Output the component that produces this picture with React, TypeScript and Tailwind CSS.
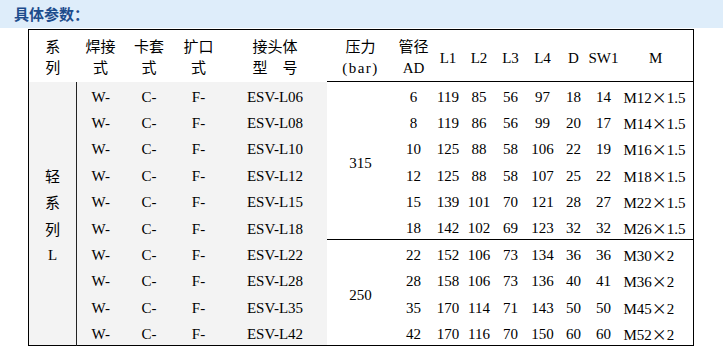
const rows = [
  { m: "ESV-L06", ad: "6", l1: "119", l2: "85", l3: "56", l4: "97", d: "18", sw: "14", t: "M12", k: "1.5" },
  { m: "ESV-L08", ad: "8", l1: "119", l2: "86", l3: "56", l4: "99", d: "20", sw: "17", t: "M14", k: "1.5" },
  { m: "ESV-L10", ad: "10", l1: "125", l2: "88", l3: "58", l4: "106", d: "22", sw: "19", t: "M16", k: "1.5" },
  { m: "ESV-L12", ad: "12", l1: "125", l2: "88", l3: "58", l4: "107", d: "25", sw: "22", t: "M18", k: "1.5" },
  { m: "ESV-L15", ad: "15", l1: "139", l2: "101", l3: "70", l4: "121", d: "28", sw: "27", t: "M22", k: "1.5" },
  { m: "ESV-L18", ad: "18", l1: "142", l2: "102", l3: "69", l4: "123", d: "32", sw: "32", t: "M26", k: "1.5" },
  { m: "ESV-L22", ad: "22", l1: "152", l2: "106", l3: "73", l4: "134", d: "36", sw: "36", t: "M30", k: "2" },
  { m: "ESV-L28", ad: "28", l1: "158", l2: "106", l3: "73", l4: "136", d: "40", sw: "41", t: "M36", k: "2" },
  { m: "ESV-L35", ad: "35", l1: "170", l2: "114", l3: "71", l4: "143", d: "50", sw: "50", t: "M45", k: "2" },
  { m: "ESV-L42", ad: "42", l1: "170", l2: "116", l3: "70", l4: "150", d: "60", sw: "60", t: "M52", k: "2" },
];

const widths = [48, 48, 49, 50, 103, 68, 38, 31, 31, 32, 32, 30, 30, 75];

const cjk = { fontFamily: '"Noto Sans CJK SC", sans-serif' };

export default function App() {
  return (
    <div
      className="h-[348px] w-[723px] overflow-hidden bg-white text-[15px] text-black"
      style={{ fontFamily: '"Liberation Serif", "Noto Sans CJK SC", serif' }}
    >
      {/* title bar */}
      <div className="flex h-[28px] items-center bg-[#deedfa] pl-[14px]">
        <span className="text-[15px] font-bold text-[#1d4c8c]" style={cjk}>
          具体参数：
        </span>
      </div>

      <table className="mt-[1px] ml-[28px] table-fixed border-collapse border border-black leading-none">
        <colgroup>
          {widths.map((w, i) => (
            <col key={i} style={{ width: w }} />
          ))}
        </colgroup>
        <thead>
          <tr className="h-[52px] text-center align-middle">
            <Head top="系" bottom="列" />
            <Head top="焊接" bottom="式" />
            <Head top="卡套" bottom="式" />
            <Head top="扩口" bottom="式" />
            <Head top="接头体" bottom="型　号" />
            <Head top="压力" bottom="(bar)" line wide />
            <Head top="管径" bottom="AD" line />
            <th className="border-b border-black pt-[6px] font-normal">L1</th>
            <th className="border-b border-black pt-[6px] font-normal">L2</th>
            <th className="border-b border-black pt-[6px] font-normal">L3</th>
            <th className="border-b border-black pt-[6px] font-normal">L4</th>
            <th className="border-b border-black pt-[6px] font-normal">D</th>
            <th className="border-b border-black pt-[6px] font-normal">SW1</th>
            <th className="border-b border-black pt-[6px] font-normal">M</th>
          </tr>
        </thead>
        <tbody>
          {rows.map((r, i) => {
            const split = i === 6 ? "border-t border-black pt-[5px]" : "pt-[5px]";
            return (
              <tr key={r.m} className="h-[26.4px] text-center align-middle">
                {i === 0 && (
                  <td rowSpan={10} className="border-r border-[#222] bg-[#f3f3f3] pt-[5px] align-middle">
                    <div className="flex flex-col items-center leading-[26.4px]" style={cjk}>
                      <span>轻</span>
                      <span>系</span>
                      <span>列</span>
                      <span style={{ fontFamily: '"Liberation Serif", serif' }}>L</span>
                    </div>
                  </td>
                )}
                <td className="bg-[#f3f3f3] pt-[5px]">W-</td>
                <td className="bg-[#f3f3f3] pt-[5px]">C-</td>
                <td className="bg-[#f3f3f3] pt-[5px]">F-</td>
                <td className="bg-[#f3f3f3] pt-[5px]">{r.m}</td>
                {i === 0 && (
                  <td rowSpan={6} className="pt-[5px]">
                    315
                  </td>
                )}
                {i === 6 && (
                  <td rowSpan={4} className="border-t border-black pt-[5px]">
                    250
                  </td>
                )}
                <td className={split}>{r.ad}</td>
                <td className={split}>{r.l1}</td>
                <td className={split}>{r.l2}</td>
                <td className={split}>{r.l3}</td>
                <td className={split}>{r.l4}</td>
                <td className={split}>{r.d}</td>
                <td className={split}>{r.sw}</td>
                <td className={`pl-[5px] text-left ${split}`}>
                  {r.t}
                  <span style={cjk}>×</span>
                  {r.k}
                </td>
              </tr>
            );
          })}
        </tbody>
      </table>
    </div>
  );
}

function Head({
  top,
  bottom,
  line,
  wide,
}: {
  top: string;
  bottom: string;
  line?: boolean;
  wide?: boolean;
}) {
  return (
    <th className={`pt-[3px] font-normal ${line ? "border-b border-black" : ""}`}>
      <div className="flex flex-col items-center gap-[8px]">
        <span style={cjk}>{top}</span>
        <span className={wide ? "tracking-[1.5px]" : ""}>{bottom}</span>
      </div>
    </th>
  );
}
